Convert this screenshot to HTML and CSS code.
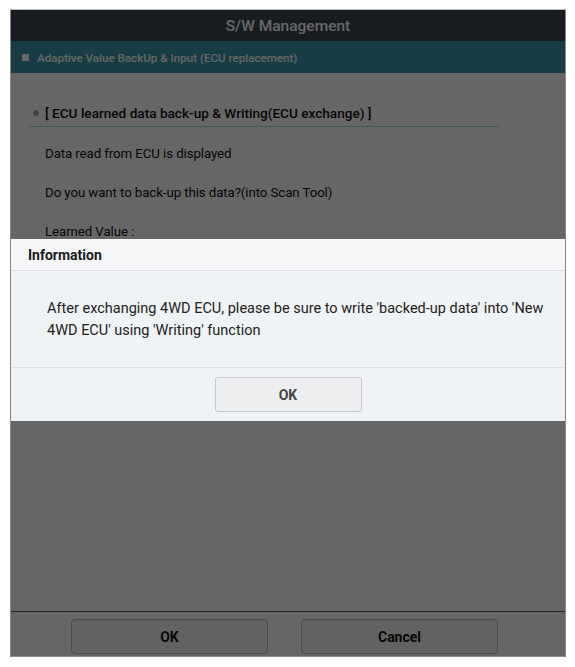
FILE: index.html
```html
<!DOCTYPE html>
<html>
<head>
<meta charset="utf-8">
<link rel="stylesheet" href="styles.css">
</head>
<body>
<div class="app">
  <header class="topbar">S/W Management</header>
  <div class="subbar"><span class="sq"></span>Adaptive Value BackUp &amp; Input (ECU replacement)</div>
  <main class="content">
    <div class="section-title"><span class="dot"></span>[ ECU learned data back-up &amp; Writing(ECU exchange) ]</div>
    <p class="line">Data read from ECU is displayed</p>
    <p class="line">Do you want to back-up this data?(into Scan Tool)</p>
    <p class="line">Learned Value :</p>
  </main>
  <footer class="footer">
    <button class="btn btn-ok">OK</button>
    <button class="btn btn-cancel">Cancel</button>
  </footer>
  <div class="overlay"></div>
  <div class="dialog">
    <div class="dlg-head">Information</div>
    <div class="dlg-body">After exchanging 4WD ECU, please be sure to write 'backed-up data' into 'New 4WD ECU' using 'Writing' function</div>
    <div class="dlg-foot"><button class="dlg-btn">OK</button></div>
  </div>
</div>
</body>
</html>
```
FILE: styles.css
```css
* { box-sizing: border-box; }
html, body { margin: 0; padding: 0; background: #fff; }
body { font-family: Roboto, "Liberation Sans", sans-serif; }

.app {
  position: relative;
  margin: 9px 0 0 10px;
  width: 556px;
  height: 648px;
  border: 1px solid #8a8a8a;
  border-top-color: #bbb;
  display: flex;
  flex-direction: column;
  background: #fff;
  overflow: hidden;
}

.topbar {
  height: 31px;
  flex: none;
  background: #3c4552;
  color: #fff;
  font-size: 15.5px;
  font-weight: 500;
  display: flex;
  align-items: center;
  justify-content: center;
  padding-top: 1px;
}

.subbar {
  height: 32px;
  flex: none;
  background: #3a96aa;
  color: #fff;
  font-size: 11.6px;
  font-weight: 500;
  display: flex;
  align-items: center;
  padding-left: 11px;
  padding-top: 1px;
}
.sq { width: 7px; height: 7px; background: #fff; margin-right: 8px; }

.content {
  flex: 1;
  padding: 32px 0 0 18px;
}
.section-title {
  width: 470px;
  font-size: 13.6px;
  font-weight: 500;
  color: #111;
  display: flex;
  align-items: center;
  padding: 0 0 5px 0;
  border-bottom: 1px solid #a8d4e0;
}
.dot { width: 6px; height: 6px; border-radius: 50%; background: #aaa; margin: 0 6px 0 4px; }
.line {
  margin: 0;
  padding-left: 16px;
  font-size: 13.3px;
  letter-spacing: -0.1px;
  color: #111;
  line-height: 20px;
}
.section-title + .line { margin-top: 17px; }
.line + .line { margin-top: 19px; }

.footer {
  height: 45px;
  flex: none;
  border-top: 1px solid #555;
  display: flex;
  align-items: flex-start;
  padding: 7px 0 0 60px;
  gap: 33px;
}
.btn {
  width: 197px;
  height: 35px;
  border: 1px solid #bbb;
  border-radius: 4px;
  background: #f6f6f6;
  color: #111;
  font-family: inherit;
  font-size: 14px;
  font-weight: 700;
}

.overlay {
  position: absolute;
  inset: 0;
  background: rgba(0,0,0,0.6);
}

.dialog {
  position: absolute;
  left: 0;
  right: 0;
  top: 229px;
  background: #f0f3f5;
  color: #222;
}
.dlg-head {
  height: 32px;
  padding-left: 17px;
  display: flex;
  align-items: center;
  font-size: 14px;
  font-weight: 700;
  color: #1a1a1a;
  background: #f4f6f7;
  border-bottom: 1px solid #dde1e3;
  padding-top: 1px;
}
.dlg-body {
  height: 97px;
  padding: 27px 20px 0 36px;
  font-size: 14.5px;
  line-height: 22px;
  color: #222;
  border-bottom: 1px solid #dde1e3;
}
.dlg-foot {
  height: 53px;
  display: flex;
  justify-content: center;
  padding-top: 9px;
}
.dlg-btn {
  width: 147px;
  height: 35px;
  border: 1px solid #c4c6c8;
  border-radius: 3px;
  background: #eceef0;
  color: #444;
  font-family: inherit;
  font-size: 14px;
  font-weight: 700;
}
```
